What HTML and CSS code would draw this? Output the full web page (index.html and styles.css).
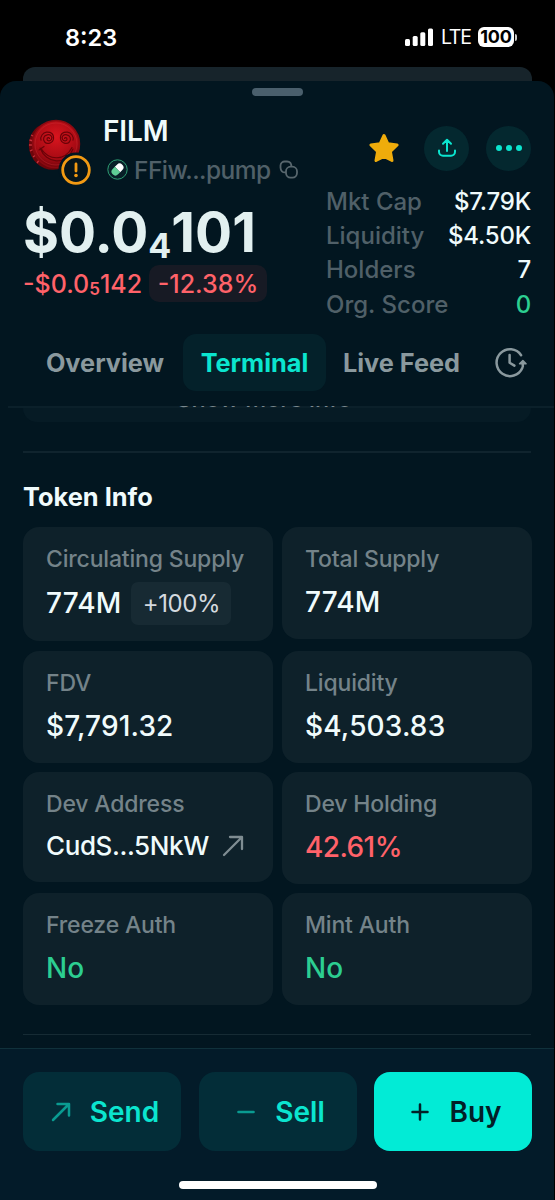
FILE: index.html
```html
<!DOCTYPE html>
<html lang="en">
<head>
<meta charset="utf-8">
<title>FILM</title>
<link rel="stylesheet" href="styles.css">
</head>
<body>
<div class="statusbar">
  <span class="clock">8:23</span>
  <div class="signals">
    <svg width="29" height="20" viewBox="0 0 29 20"><g fill="#fff"><rect x="0" y="12" width="5" height="7" rx="1.5"/><rect x="7.7" y="9" width="5" height="10" rx="1.5"/><rect x="15.3" y="5.300" width="5" height="13.700" rx="1.500"/><rect x="23" y="1.500" width="5" height="17.500" rx="1.500"/></g></svg>
    <span class="network">LTE</span>
    <span class="battery">100</span><i class="cap"></i>
  </div>
</div>
<div class="backsheet"></div>
<main class="sheet">
  <div class="handle"></div>
  <header class="token">
    <div class="identity">
      <div class="avatar">
        <svg width="70" height="68" viewBox="0 0 70 68">
          <defs><radialGradient id="coin" cx=".5" cy=".35" r=".7"><stop offset="0" stop-color="#d9151e"/><stop offset=".65" stop-color="#a90b14"/><stop offset="1" stop-color="#650209"/></radialGradient></defs>
          <ellipse cx="30" cy="28" rx="23" ry="24" transform="rotate(-25 30 28)" fill="#6e050b"/>
          <path d="M9 17l4 2M7.500 22l4 1M7 27l4 0M8 33l4-2M11 39l4-3M15 45l3-4" stroke="#c3303a" stroke-width="1.300"/>
          <circle cx="34" cy="26" r="23.500" fill="url(#coin)" stroke="#8a0a11" stroke-width="1.500"/>
          <circle cx="34" cy="26" r="21" fill="none" stroke="#d3343b" stroke-width=".6" opacity=".6"/>
          <g fill="none" stroke="#6b0308" stroke-width="1.200" stroke-linecap="round">
            <path d="M27.500 20.500c-.5-1.500-2.500-1-2.500.8s3.200 2.600 4.500 0-.8-5-4.300-4.500-4.800 4.600-2.500 7.200 8.300 1.500 8.800-3.500-3.300-6.800-7-6.300-6.500 4.300-5.500 8"/>
            <path d="M42.500 20.500c.5-1.500 2.500-1 2.500.8s-3.200 2.600-4.500 0 .8-5 4.300-4.500 4.800 4.600 2.500 7.200-8.300 1.500-8.800-3.500 3.300-6.800 7-6.300 6.500 4.300 5.500 8"/>
            <path d="M17 32l5-3.500M19 30.500c8 12.500 24 12.500 31-1M18 30c6 16 26 18 33 1"/>
          </g>
          <circle cx="54" cy="52" r="17.500" fill="#021620"/>
          <circle cx="54" cy="52" r="13.300" fill="#06151b" stroke="#f29a13" stroke-width="2.800"/>
          <path d="M54 46v7" stroke="#f29a13" stroke-width="2.800" stroke-linecap="round"/><circle cx="54" cy="57.500" r="1.800" fill="#f29a13"/>
        </svg>
      </div>
      <div class="names">
        <h1 class="symbol">FILM</h1>
        <div class="address">
          <svg width="21" height="21" viewBox="0 0 21 21"><circle cx="10.500" cy="10.500" r="9.700" fill="#082028" stroke="#2f9e74" stroke-width="1"/><g transform="rotate(45 10.500 10.500)"><path d="M6.700 10.500V7.500a3.800 3.800 0 0 1 7.600 0v3z" fill="#fff"/><path d="M6.700 10.500v3a3.800 3.800 0 0 0 7.600 0v-3z" fill="#5fcf96"/></g></svg>
          <span class="addrtext">FFiw...pump</span>
          <svg class="copy" width="20" height="20" viewBox="0 0 20 20" fill="none" stroke="#57666d" stroke-width="1.800"><rect x="7" y="6.700" width="11" height="11" rx="4.600"/><path d="M7 12.300C3.500 13 1.500 10.500 1.500 7.500V5.500A4.200 4.200 0 0 1 5.700 1.500H8c3 0 4.600 2 4.300 5.200"/></svg>
        </div>
      </div>
      <div class="actions">
        <svg width="32" height="30" viewBox="0 0 32 30"><path d="M16 2.500l3.900 8.300 9.200 1.200-6.700 6.500 1.600 9L16 23.300 8 27.500l1.600-9L2.900 12l9.200-1.200z" fill="#efac0b" stroke="#efac0b" stroke-width="3" stroke-linejoin="round"/></svg>
        <span class="round"><svg width="22" height="22" viewBox="0 0 22 22" fill="none" stroke="#0be5cf" stroke-width="2" stroke-linecap="round" stroke-linejoin="round"><path d="M11 14V3.200M7 6.800l4-4 4 4M3 13.500v1.300A4 4 0 0 0 7 18.800h8a4 4 0 0 0 4-4v-1.300"/></svg></span>
        <span class="round"><svg width="28" height="8" viewBox="0 0 28 8" fill="#0be5cf"><circle cx="4" cy="4" r="3"/><circle cx="14" cy="4" r="3"/><circle cx="24" cy="4" r="3"/></svg></span>
      </div>
    </div>
    <div class="figures">
      <div>
        <div class="price">$0.0<span class="pricesub">4</span>101</div>
        <div class="change"><span class="delta">-$0.0<span class="deltasub">5</span>142</span><span class="percent">-12.38%</span></div>
      </div>
      <dl class="stats">
        <div class="stat"><dt>Mkt Cap</dt><dd>$7.79K</dd></div>
        <div class="stat"><dt>Liquidity</dt><dd>$4.50K</dd></div>
        <div class="stat"><dt>Holders</dt><dd>7</dd></div>
        <div class="stat"><dt>Org. Score</dt><dd class="green">0</dd></div>
      </dl>
    </div>
  </header>
  <nav class="tabs">
    <span class="tab overview">Overview</span><span class="tab active">Terminal</span><span class="tab feed">Live Feed</span>
    <svg class="history" width="34" height="32" viewBox="0 0 34 32" fill="none" stroke="#8a999e" stroke-width="2.500" stroke-linecap="round" stroke-linejoin="round"><path d="M27.100 8.200A13.400 13.400 0 1 0 28.300 21M15.600 8v7.700l4.800 2.900"/><path d="M28.800 16v3.500"/><path d="M25.500 16.800l3.400-3.200 3.200 3.200z" fill="#8a999e" stroke-width="1.400"/></svg>
  </nav>
  <div class="edge"></div>
  <section class="content">
    <div class="more"><span class="moretext">Show more info</span></div>
    <div class="rule"></div>
    <h2 class="heading">Token Info</h2>
    <div class="grid">
      <div class="card tall"><div class="label">Circulating Supply</div><div class="supply"><span class="value">774M</span><span class="chip">+100%</span></div></div>
      <div class="card"><div class="label">Total Supply</div><div class="value">774M</div></div>
      <div class="card"><div class="label">FDV</div><div class="value">$7,791.32</div></div>
      <div class="card"><div class="label">Liquidity</div><div class="value">$4,503.83</div></div>
      <div class="card short"><div class="label">Dev Address</div><div class="value dev"><span>CudS...5NkW</span><svg width="22" height="22" viewBox="0 0 22 22" fill="none" stroke="#7f8d92" stroke-width="2.300" stroke-linecap="round" stroke-linejoin="round"><path d="M2 20L20 2M8 2h12v12"/></svg></div></div>
      <div class="card"><div class="label">Dev Holding</div><div class="value red">42.61%</div></div>
      <div class="card"><div class="label">Freeze Auth</div><div class="value green">No</div></div>
      <div class="card"><div class="label">Mint Auth</div><div class="value green">No</div></div>
    </div>
    <div class="rule last"></div>
  </section>
  <footer class="footer">
    <div class="buttons">
      <span class="btn"><svg width="20" height="20" viewBox="0 0 20 20" fill="none" stroke="#0a9b91" stroke-width="2.500" stroke-linecap="round" stroke-linejoin="round"><path d="M2 18L18 2M6.500 2H18v11.500"/></svg>Send</span>
      <span class="btn"><svg width="20" height="20" viewBox="0 0 20 20" stroke="#0a9b91" stroke-width="2.600" stroke-linecap="round"><path d="M2.500 10h15"/></svg>Sell</span>
      <span class="btn buy"><svg width="20" height="20" viewBox="0 0 20 20" stroke="#022027" stroke-width="2.500" stroke-linecap="round"><path d="M2.500 10h15M10 2.500v15"/></svg>Buy</span>
    </div>
    <div class="homebar"></div>
  </footer>
</main>
</body>
</html>
```
FILE: styles.css
```css
* { box-sizing: border-box; margin: 0; }
body { width: 555px; height: 1200px; overflow: hidden; background: #000; font-family: Inter, "Liberation Sans", sans-serif; color: #f0fbfc; }
svg { display: block; flex: none; }
.statusbar { height: 67px; display: flex; justify-content: space-between; padding: 25px 38px 0 65px; color: #fff; }
.clock { font-size: 23.500px; line-height: 25px; font-weight: 600; }
.signals { display: flex; align-items: center; height: 24px; }
.network { font-size: 19.500px; margin-left: 7px; width: 30px; margin-right: 7px; letter-spacing: -1.300px; }
.battery { background: #fff; color: #000; width: 36px; height: 20px; border-radius: 6px; font-size: 18px; line-height: 20px; font-weight: 700; text-align: center; letter-spacing: -.2px; }
.cap { width: 2px; height: 7px; border-radius: 0 3px 3px 0; background: #ccc; margin-left: 1px; }
.backsheet { height: 14px; margin: 0 23px; border-radius: 12px 12px 0 0; background: #17242b; }
.sheet { width: 554px; height: 1119px; border-radius: 16px 16px 0 0; background: #021620; overflow: hidden; display: flex; flex-direction: column; }
.handle { width: 51px; height: 8px; border-radius: 4px; background: #4a5f6c; margin: 7px auto 0 252px; flex: none; }
.token { height: 238px; padding: 20px 23px 0; flex: none; }
.identity { display: flex; height: 78px; }
.avatar { width: 80px; flex: none; }
.names { width: 265px; flex: none; }
.avatar svg { margin: 2px 0 0 -1px; }
.symbol { font-size: 28px; line-height: 31px; font-weight: 600; letter-spacing: -.1px; }
.address { display: flex; align-items: center; margin-top: 7px; margin-left: 4px; height: 31px; color: #506068; font-size: 24.500px; font-weight: 450; }
.addrtext { margin-left: 6px; width: 137px; letter-spacing: -.55px; white-space: nowrap; }
.copy { margin-left: 8px; }
.actions { display: flex; align-items: center; height: 64px; flex: none; }
.actions .round { margin-left: 24px; }
.actions .round + .round { margin-left: 17px; }
.round { width: 45px; height: 45px; border-radius: 50%; background: #04282f; display: flex; align-items: center; justify-content: center; flex: none; }
.figures { display: flex; justify-content: space-between; margin-top: -10px; }
.price { font-size: 55px; line-height: 60px; height: 60px; font-weight: 700; color: #e2f0f0; margin-top: 18px; white-space: nowrap; }
.pricesub { font-size: 34px; position: relative; top: 6px; }
.change { display: flex; align-items: center; height: 37px; margin-top: 3px; font-size: 25px; color: #ff6269; font-weight: 450; }
.delta { width: 126px; white-space: nowrap; line-height: 38px; height: 37px; }
.deltasub { font-size: 17px; position: relative; top: 2px; font-weight: 600; }
.percent { background: #171a24; border-radius: 10px; width: 118px; height: 37px; line-height: 38px; text-align: center; }
.stats { width: 205px; font-size: 24px; font-weight: 500; padding-top: 1px; }
.stat { display: flex; justify-content: space-between; height: 34.500px; line-height: 32px; }
.stat:first-child { line-height: 33px; }
.stat dt { color: #506068; }
.stat dd { letter-spacing: -.2px; }
.green { color: #2cce91; }
.red { color: #ff6269; }
.tabs { height: 72px; display: flex; padding-left: 27px; flex: none; font-size: 25.300px; font-weight: 700; color: #8a999e; line-height: 58px; }
.tab { text-align: center; height: 57px; flex: none; }
.overview { width: 156px; }
.active { width: 143px; border-radius: 13px; background: #04212a; color: #0be5cf; }
.feed { width: 151px; }
.history { margin: 13px 0 0 17px; }
.edge { height: 2px; margin-left: 8px; background: #0b202a; flex: none; }
.content { height: 642px; margin-top: -2px; padding: 0 23px; flex: none; overflow: hidden; }
.more { height: 16px; border-top: 2px solid #0b202a; border-radius: 0 0 14px 14px; background: #061b25; text-align: center; font-size: 23.500px; line-height: 20px; color: #7a898f; font-weight: 500; }
.moretext { display: block; margin: 0 26px 0 0; transform: translateY(-19px); }
.rule { height: 2px; background: #10242e; margin-top: 28.500px; }
.heading { font-size: 25.400px; line-height: 32px; font-weight: 700; margin-top: 28px; }
.grid { display: grid; grid-template-columns: 250px 250px; grid-template-rows: 114.500px 111.500px 111.500px 112px; column-gap: 9px; row-gap: 9.500px; align-items: start; margin-top: 14px; }
.card { height: 112px; border-radius: 16px; background: #0e212a; padding: 17px 22px 0 23px; white-space: nowrap; }
.tall { height: 114px; }
.short { height: 110px; }
.label { font-size: 23px; line-height: 30px; font-weight: 450; letter-spacing: -.18px; color: #748389; }
.value { font-size: 28px; line-height: 36px; font-weight: 450; letter-spacing: .15px; margin-top: 10px; }
.supply { display: flex; align-items: center; margin-top: 8px; }
.supply .value { margin-top: 0; }
.chip { height: 43px; width: 100px; border-radius: 7px; background: #172a33; font-size: 24px; line-height: 43px; text-align: center; color: #d4d9df; margin-left: 10px; letter-spacing: -.4px; }
.value.red { letter-spacing: -.6px; }
.dev { display: flex; align-items: center; justify-content: space-between; font-size: 26px; letter-spacing: -.4px; margin-top: 9px; padding-right: 7px; }
.last { margin-top: 29px; height: 1px; background: #162b34; }
.footer { height: 152px; border-top: 1px solid #10313b; background: #031b29; padding: 23px 22px 0 23px; flex: none; }
.buttons { display: flex; gap: 17.500px; }
.btn { width: 158px; height: 79px; border-radius: 16px; background: #032d38; color: #0be5cf; font-size: 28px; font-weight: 600; display: flex; align-items: center; justify-content: center; gap: 19px; padding-left: 6px; }
.buy { background: #02ebd6; color: #022027; }
.homebar { width: 198px; height: 8px; border-radius: 4px; background: #fff; margin: 30px 0 0 156px; }
```
